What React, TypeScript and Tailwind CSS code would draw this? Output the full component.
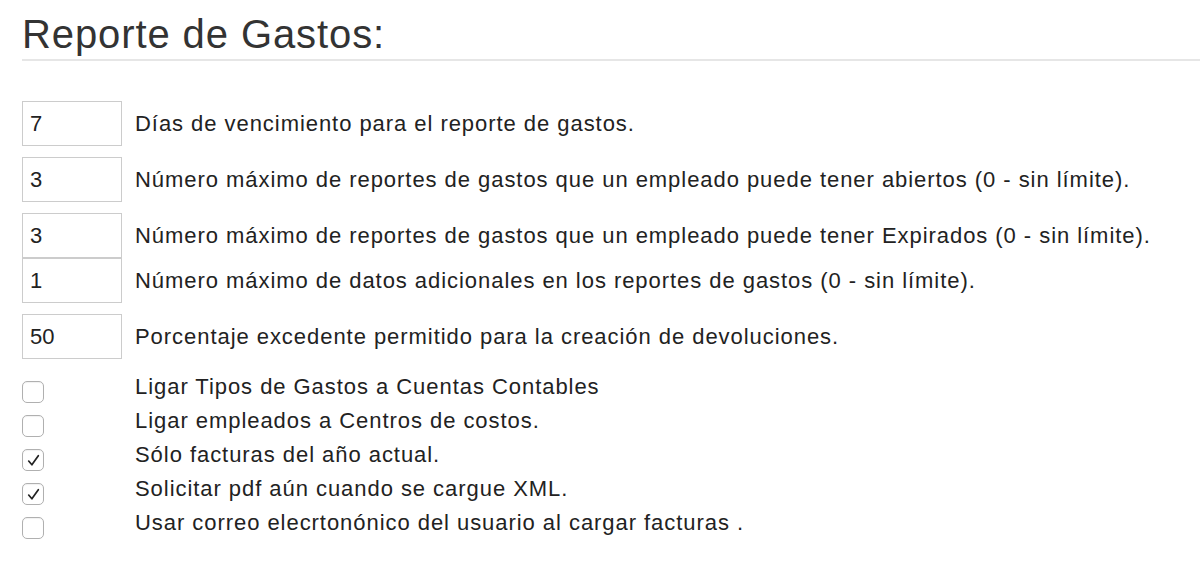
import React from "react";

const inputs: { value: string; label: string; gapAfter: boolean }[] = [
  { value: "7", label: "Días de vencimiento para el reporte de gastos.", gapAfter: true },
  { value: "3", label: "Número máximo de reportes de gastos que un empleado puede tener abiertos (0 - sin límite).", gapAfter: true },
  { value: "3", label: "Número máximo de reportes de gastos que un empleado puede tener Expirados (0 - sin límite).", gapAfter: false },
  { value: "1", label: "Número máximo de datos adicionales en los reportes de gastos (0 - sin límite).", gapAfter: true },
  { value: "50", label: "Porcentaje excedente permitido para la creación de devoluciones.", gapAfter: true },
];

const checks: { checked: boolean; label: string }[] = [
  { checked: false, label: "Ligar Tipos de Gastos a Cuentas Contables" },
  { checked: false, label: "Ligar empleados a Centros de costos." },
  { checked: true, label: "Sólo facturas del año actual." },
  { checked: true, label: "Solicitar pdf aún cuando se cargue XML." },
  { checked: false, label: "Usar correo elecrtonónico del usuario al cargar facturas ." },
];

function Box({ checked }: { checked: boolean }) {
  return (
    <div className="w-[22px] h-[22px] rounded-[5px] border border-[#b0b0b0] bg-white flex items-center justify-center shadow-[inset_0_1px_1px_rgba(0,0,0,0.06)]">
      {checked && (
        <svg width="15" height="15" viewBox="0 0 14 14">
          <path d="M2.5 7.5 L5.5 11 L11.5 2.5" fill="none" stroke="#222" strokeWidth="1.6" strokeLinecap="round" strokeLinejoin="round" />
        </svg>
      )}
    </div>
  );
}

export default function App() {
  return (
    <div className="w-[1200px] h-[561px] bg-white text-[#333] overflow-hidden" style={{ fontFamily: '"Liberation Sans", Arial, sans-serif' }}>
      <div className="pl-[22px]">
        <h1 className="text-[40px] leading-[44px] pt-[12px] text-[#333] font-normal tracking-[0.9px]">Reporte de Gastos:</h1>
        <div className="mt-[3px] h-[2px] bg-[#e6e6e6]" />
        <div className="mt-[40px]">
          {inputs.map((r, i) => (
            <div key={i} className={`flex items-center ${r.gapAfter ? "mb-[11px]" : ""}`}>
              <div className="w-[113px] shrink-0">
                <div className="w-[100px] h-[45px] border border-[#cccccc] flex items-center pl-[7px] text-[22px] text-[#222]">
                  {r.value}
                </div>
              </div>
              <div className="text-[22px] tracking-[0.95px] text-[#222] whitespace-nowrap">{r.label}</div>
            </div>
          ))}
        </div>
        <div>
          {checks.map((c, i) => (
            <div key={i} className="flex items-start h-[34px]">
              <div className="w-[113px] shrink-0 pt-[11px]">
                <Box checked={c.checked} />
              </div>
              <div className="text-[22px] leading-[34px] tracking-[0.95px] text-[#222] whitespace-nowrap">{c.label}</div>
            </div>
          ))}
        </div>
      </div>
    </div>
  );
}
